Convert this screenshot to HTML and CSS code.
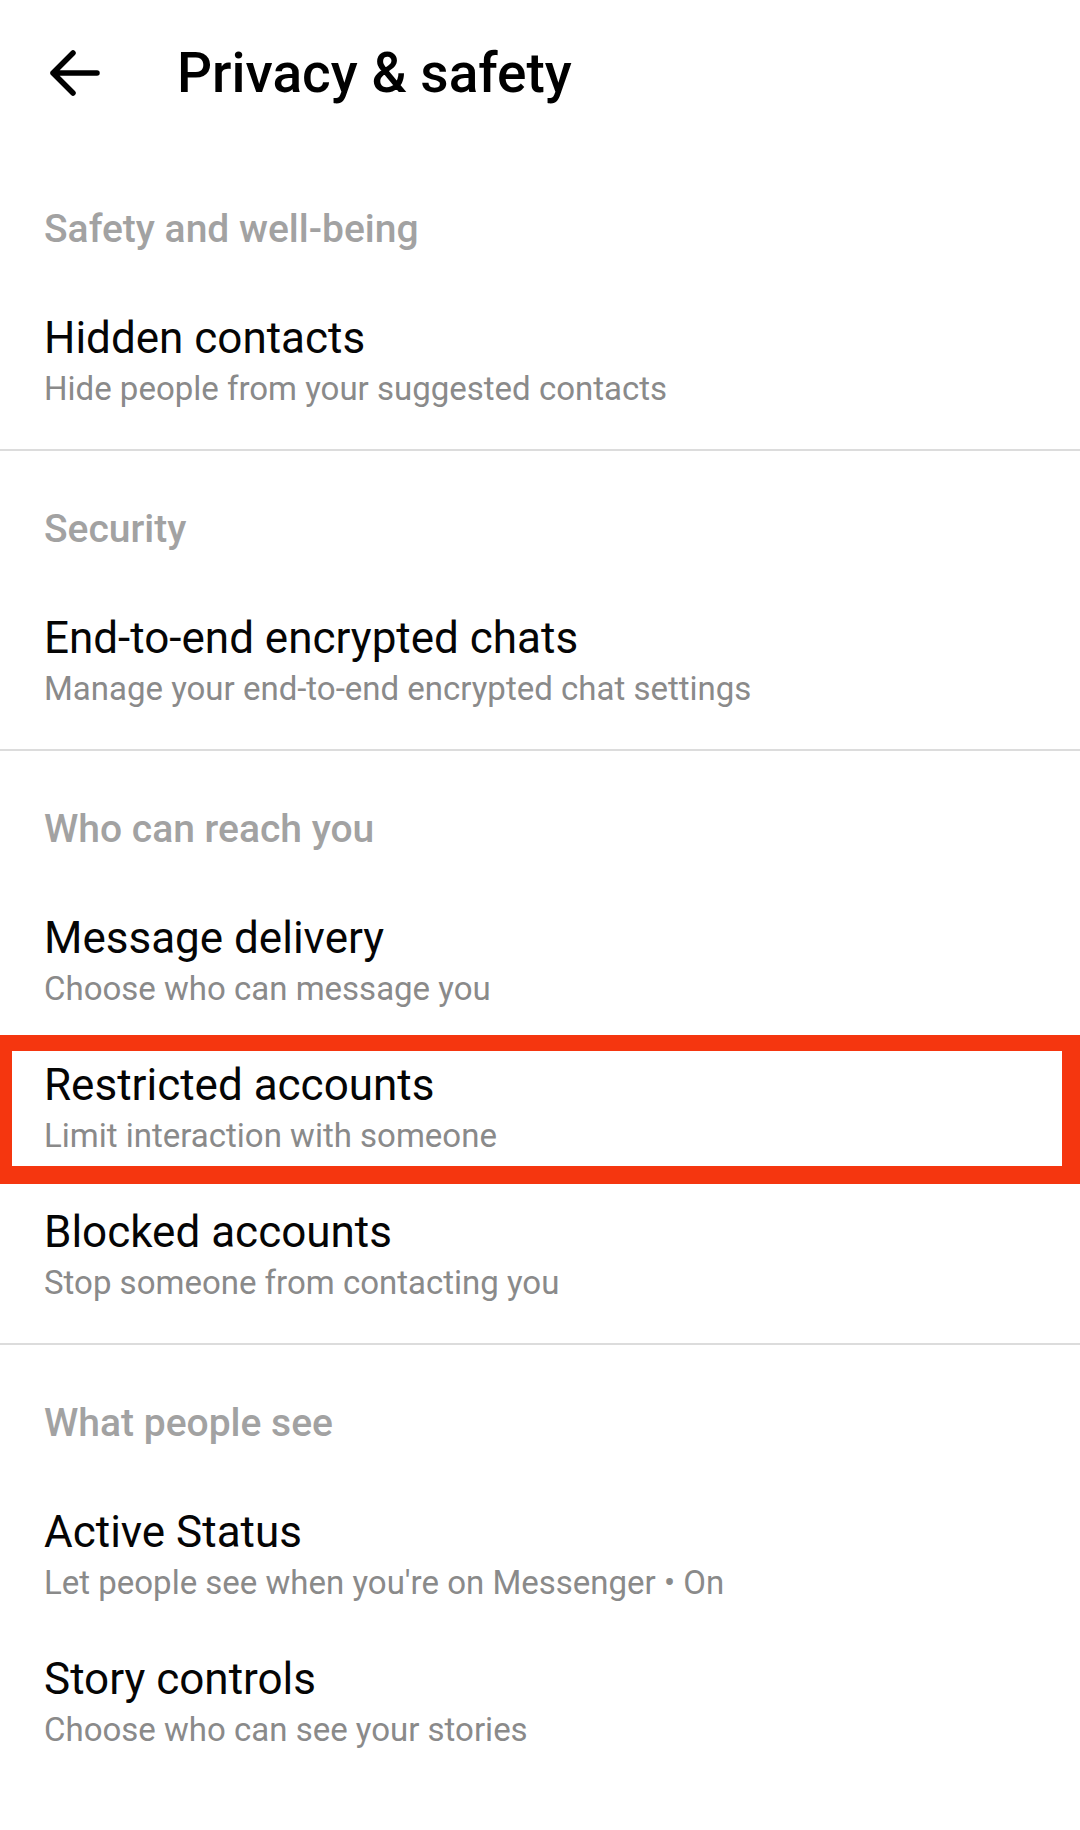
FILE: index.html
```html
<!DOCTYPE html>
<html lang="en">
<head>
<meta charset="utf-8">
<title>Privacy &amp; safety</title>
<link rel="stylesheet" href="styles.css">
</head>
<body>
<div class="screen">
  <header class="toolbar">
    <span class="back" aria-label="Back">
      <svg width="56" height="48" viewBox="0 0 56 48" aria-hidden="true">
        <path d="M49 24H5M25 4L5 24L25 44" fill="none" stroke="#000" stroke-width="5.5" stroke-linecap="round" stroke-linejoin="round"/>
      </svg>
    </span>
    <h1 class="title">Privacy &amp; safety</h1>
  </header>

  <section class="section">
    <h2 class="section-header">Safety and well-being</h2>
    <div class="item">
      <div class="item-title">Hidden contacts</div>
      <div class="item-sub">Hide people from your suggested contacts</div>
    </div>
  </section>

  <section class="section">
    <h2 class="section-header">Security</h2>
    <div class="item">
      <div class="item-title">End-to-end encrypted chats</div>
      <div class="item-sub">Manage your end-to-end encrypted chat settings</div>
    </div>
  </section>

  <section class="section">
    <h2 class="section-header">Who can reach you</h2>
    <div class="item">
      <div class="item-title">Message delivery</div>
      <div class="item-sub">Choose who can message you</div>
    </div>
    <div class="item highlighted">
      <div class="item-title">Restricted accounts</div>
      <div class="item-sub">Limit interaction with someone</div>
    </div>
    <div class="item">
      <div class="item-title">Blocked accounts</div>
      <div class="item-sub">Stop someone from contacting you</div>
    </div>
  </section>

  <section class="section">
    <h2 class="section-header">What people see</h2>
    <div class="item">
      <div class="item-title">Active Status</div>
      <div class="item-sub">Let people see when you're on Messenger • On</div>
    </div>
    <div class="item">
      <div class="item-title">Story controls</div>
      <div class="item-sub">Choose who can see your stories</div>
    </div>
  </section>
</div>
</body>
</html>
```

FILE: styles.css
```css
* { box-sizing: border-box; }

html, body {
  margin: 0;
  padding: 0;
  background: #ffffff;
}

body {
  font-family: Roboto, "Noto Sans", "Liberation Sans", sans-serif;
  color: #000;
}

.screen {
  width: 1080px;
  min-height: 1830px;
  background: #fff;
  overflow: hidden;
}

.toolbar {
  height: 151px;
  display: flex;
  align-items: flex-start;
  padding-top: 45px;
}

.back {
  width: 56px;
  height: 56px;
  margin-left: 48px;
  display: flex;
  align-items: center;
  justify-content: center;
}

.back svg { display: block; }

.title {
  margin: 0 0 0 73px;
  font-size: 55px;
  line-height: 56px;
  font-weight: 500;
  color: #000;
}

.section {
  padding-bottom: 14px;
}

.section + .section {
  border-top: 2px solid #dcdcdc;
}

.section-header {
  margin: 0;
  padding: 54px 44px 35px;
  font-size: 39px;
  line-height: 48px;
  font-weight: 500;
  color: #a2a2a2;
}

.item {
  position: relative;
  height: 147px;
  padding: 24px 44px 21px;
}

.item-title {
  font-size: 44px;
  line-height: 52px;
  color: #050505;
}

.item-sub {
  font-size: 33px;
  line-height: 50px;
  color: #8a8a8a;
}

.highlighted::after {
  content: "";
  position: absolute;
  left: 0;
  right: 0;
  top: 0;
  bottom: -2px;
  border-style: solid;
  border-color: #f5360f;
  border-width: 16px 18px 18px 12px;
  pointer-events: none;
}
```
